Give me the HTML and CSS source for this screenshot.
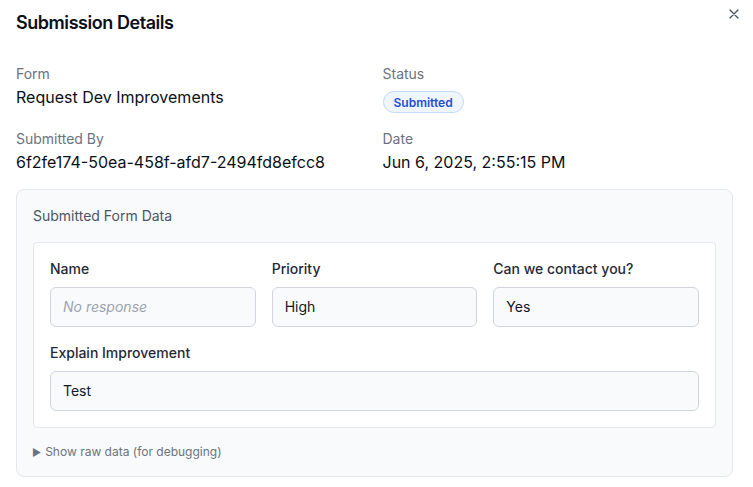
FILE: index.html
```html
<!DOCTYPE html>
<html lang="en">
<head>
<meta charset="utf-8">
<title>Submission Details</title>
<link rel="stylesheet" href="styles.css">
</head>
<body>
<div class="dialog">
  <div class="header">
    <h2 class="title">Submission Details</h2>
    <button class="close" aria-label="Close">
      <svg width="10" height="10" viewBox="0 0 10 10" fill="none" stroke="#4b5563" stroke-width="1.3" stroke-linecap="round"><path d="M1 1L9 9M9 1L1 9"/></svg>
    </button>
  </div>
  <div class="meta">
    <div class="field">
      <div class="meta-label">Form</div>
      <div class="meta-value">Request Dev Improvements</div>
    </div>
    <div class="field">
      <div class="meta-label">Status</div>
      <div class="badge-row"><span class="badge">Submitted</span></div>
    </div>
    <div class="field">
      <div class="meta-label">Submitted By</div>
      <div class="meta-value">6f2fe174-50ea-458f-afd7-2494fd8efcc8</div>
    </div>
    <div class="field">
      <div class="meta-label">Date</div>
      <div class="meta-value">Jun 6, 2025, 2:55:15 PM</div>
    </div>
  </div>
  <div class="panel">
    <div class="panel-title">Submitted Form Data</div>
    <div class="card">
      <div class="grid3">
        <div class="ffield">
          <div class="flabel">Name</div>
          <div class="fbox empty">No response</div>
        </div>
        <div class="ffield">
          <div class="flabel">Priority</div>
          <div class="fbox">High</div>
        </div>
        <div class="ffield">
          <div class="flabel">Can we contact you?</div>
          <div class="fbox">Yes</div>
        </div>
        <div class="ffield full">
          <div class="flabel">Explain Improvement</div>
          <div class="fbox">Test</div>
        </div>
      </div>
    </div>
    <div class="raw"><span class="tri">&#9654;</span>Show raw data (for debugging)</div>
  </div>
</div>
</body>
</html>
```
FILE: styles.css
```css
* { box-sizing: border-box; }
html, body { margin: 0; padding: 0; background: #ffffff; }
body {
  font-family: Inter, "Noto Sans", "Liberation Sans", sans-serif;
  color: #111827;
}
.dialog {
  width: 753px;
  padding: 9px 20px 0 16px;
}
.header {
  display: flex;
  justify-content: space-between;
  align-items: flex-start;
}
.title {
  margin: 0;
  font-size: 18px;
  line-height: 28px;
  font-weight: 600;
  color: #0b0f19;
  letter-spacing: -0.025em;
}
.close {
  border: 0;
  background: none;
  padding: 0;
  margin: 0 -6px 0 0;
  width: 10px;
  height: 10px;
  display: flex;
  cursor: pointer;
}
.meta {
  display: grid;
  grid-template-columns: 1fr 1fr;
  column-gap: 16px;
  row-gap: 20px;
  margin-top: 27px;
}
.meta-label {
  font-size: 14px;
  line-height: 20px;
  color: #6b7280;
}
.meta-value {
  margin-top: 1px;
  font-size: 16px;
  line-height: 24px;
  color: #0b0f19;
}
.badge-row {
  margin-top: 7px;
  height: 18px;
  display: flex;
}
.badge {
  display: inline-flex;
  align-items: center;
  height: 22px;
  padding: 0 10px;
  border: 1px solid #bfdbfe;
  border-radius: 999px;
  background: #eff6ff;
  color: #1d4ed8;
  font-size: 12px;
  font-weight: 600;
}
.panel {
  margin-top: 15px;
  background: #f9fafb;
  border: 1px solid #e5e7eb;
  border-radius: 8px;
  padding: 16px;
}
.panel-title {
  font-size: 14px;
  line-height: 20px;
  color: #4b5563;
  margin-bottom: 16px;
}
.card {
  background: #ffffff;
  border: 1px solid #e5e7eb;
  border-radius: 4px;
  padding: 16px;
}
.grid3 {
  display: grid;
  grid-template-columns: repeat(3, 1fr);
  column-gap: 16px;
  row-gap: 16px;
}
.ffield.full { grid-column: 1 / -1; }
.flabel {
  font-size: 14px;
  line-height: 20px;
  color: #1f2937;
  font-weight: 500;
  margin-bottom: 8px;
}
.fbox {
  height: 40px;
  display: flex;
  align-items: center;
  padding: 0 12px 1px;
  background: #f9fafb;
  border: 1px solid #d1d5db;
  border-radius: 6px;
  font-size: 14px;
  color: #111827;
}
.fbox.empty {
  color: #9ca3af;
  font-style: italic;
}
.raw {
  margin-top: 16px;
  font-size: 12px;
  line-height: 16px;
  color: #6b7280;
  display: flex;
  align-items: center;
}
.tri {
  font-size: 10px;
  margin-right: 4px;
  margin-left: -1px;
  color: #6b7280;
}
```
